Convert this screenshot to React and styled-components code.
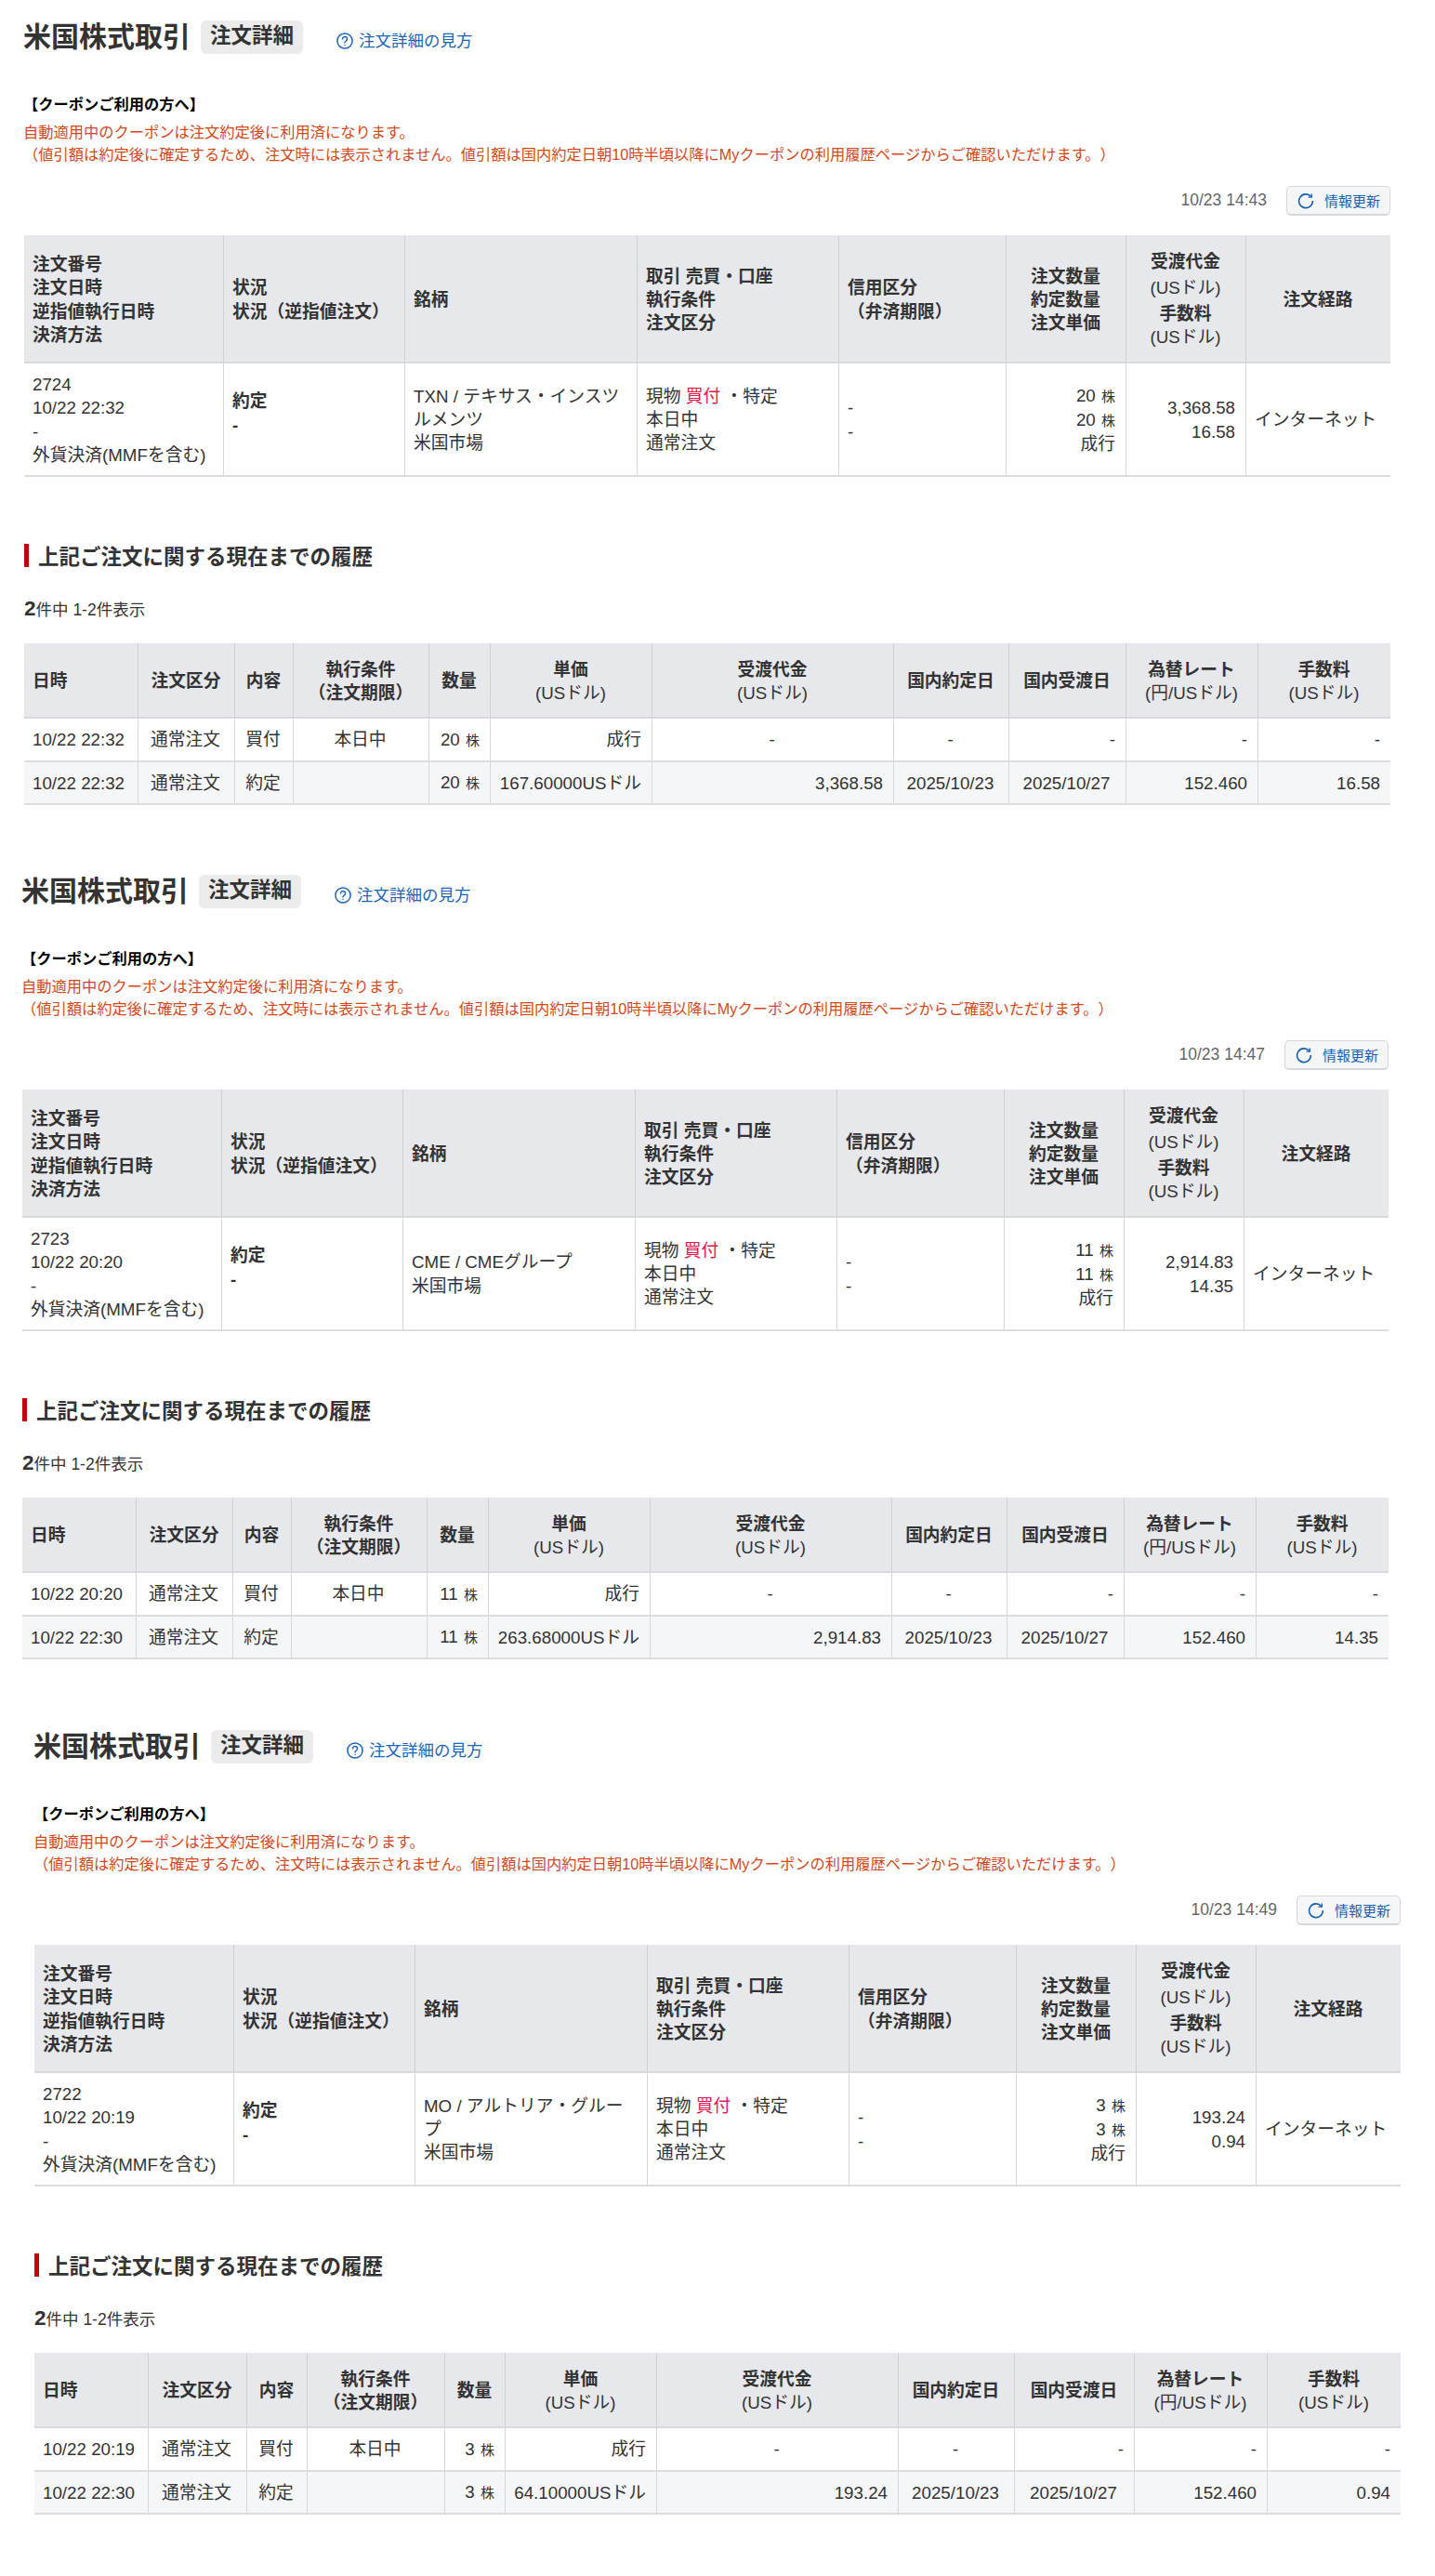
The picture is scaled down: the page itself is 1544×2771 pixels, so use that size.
import React from 'react';
import styled, { createGlobalStyle } from 'styled-components';

const Global = createGlobalStyle`
  html, body { margin: 0; padding: 0; background: #fff; }
  body {
    font-family: "Liberation Sans", "Noto Sans CJK JP", sans-serif;
    font-size: 18.75px;
    line-height: 25.3px;
    color: #333;
    text-spacing-trim: space-all;
  }
`;

const Section = styled.section`
  width: 1470px;
  margin-left: ${(p) => p.$x}px;
  padding-top: 22px;
  padding-bottom: ${(p) => p.$after}px;
`;
const TitleRow = styled.div`
  display: flex;
  align-items: flex-start;
  height: 36px;
`;
const Title = styled.h1`
  margin: 0 11px 0 -1px;
  font-size: 30px;
  line-height: 36px;
  font-weight: 700;
  color: #333;
`;
const Tag = styled.span`
  height: 36px;
  padding: 0 10px;
  border-radius: 6px;
  background: #ebebeb;
  font-size: 22.5px;
  line-height: 34px;
  font-weight: 700;
  color: #333;
`;
const HelpLink = styled.a`
  display: flex;
  align-items: center;
  gap: 6px;
  margin: 9px 0 0 36px;
  font-size: 17.5px;
  line-height: 26px;
  color: #1a66b8;
`;
const Coupon = styled.div`
  margin: 42px 0 0 -1px;
  font-size: 16.25px;
  line-height: 24px;
`;
const CouponTitle = styled.div`
  margin-bottom: 6px;
  font-weight: 700;
  color: #000;
`;
const CouponNote = styled.div`
  color: #d4481a;
`;
const MetaRow = styled.div`
  display: flex;
  justify-content: flex-end;
  align-items: center;
  gap: 21px;
  margin-top: 22px;
`;
const Stamp = styled.span`
  font-size: 17.5px;
  color: #666;
`;
const Refresh = styled.button`
  display: flex;
  align-items: center;
  gap: 11px;
  box-sizing: border-box;
  width: 112px;
  height: 32px;
  padding: 0 0 0 11px;
  border: 1px solid #d6d7da;
  border-bottom-width: 2px;
  border-radius: 5px;
  background: #f5f6f8;
  font-family: inherit;
  font-size: 15px;
  color: #1a62b4;
`;
const Table = styled.table`
  width: 1470px;
  margin-top: ${(p) => p.$top}px;
  table-layout: fixed;
  border-collapse: separate;
  border-spacing: 0;
`;
const Th = styled.th`
  box-sizing: border-box;
  height: ${(p) => p.$h}px;
  padding: 3px 10px 0 9px;
  background: #e7e8ec;
  border-bottom: 2px solid #d8d9dc;
  border-left: 1px solid #d0d1d5;
  text-align: ${(p) => p.$align || 'center'};
  vertical-align: middle;
  font-weight: 700;
  &:first-child { border-left: 0; }
`;
const Sub = styled.span`
  display: block;
  margin-top: ${(p) => p.$gap || 0}px;
  font-weight: 400;
`;
const FeeLabel = styled.span`
  display: block;
  margin-top: 3px;
`;
const Plain = styled.span`
  display: block;
  white-space: nowrap;
`;
const Td = styled.td`
  box-sizing: border-box;
  height: ${(p) => p.$h}px;
  padding: 1px 11px 0 9px;
  background: ${(p) => (p.$alt ? '#f5f6f8' : '#fff')};
  border-bottom: 2px solid #dcdde0;
  border-left: 1px solid #d6d7d9;
  text-align: ${(p) => p.$align || 'left'};
  vertical-align: middle;
  white-space: ${(p) => (p.$nowrap ? 'nowrap' : 'normal')};
  &:first-child { border-left: 0; }
`;
const Status = styled.div`
  padding-bottom: 14px;
  font-weight: 700;
`;
const Buy = styled.span`
  color: #e5174f;
`;
const Unit = styled.small`
  margin-left: 1px;
  font-size: 15px;
`;
const Heading = styled.h2`
  box-sizing: border-box;
  height: 25px;
  margin: 72px 0 0;
  padding-left: 10px;
  border-left: 5px solid #c4000b;
  font-size: 22.5px;
  line-height: 29px;
  font-weight: 700;
  color: #333;
`;
const Count = styled.div`
  height: 25px;
  margin-top: 32px;
  font-size: 17.5px;
  line-height: 25px;
`;
const CountNum = styled.b`
  font-size: 22.5px;
`;

const QuestionIcon = () => (
  <svg width="18" height="18" viewBox="0 0 18 18" fill="none" stroke="#1a66b8" strokeWidth="1.5" strokeLinecap="round" aria-hidden="true">
    <circle cx="9" cy="9" r="8.1" />
    <path d="M6.5 6.9a2.5 2.5 0 1 1 3.9 2.1c-.9.6-1.4 1-1.4 2.1" />
    <path d="M9 13.5v.1" />
  </svg>
);

const RefreshIcon = () => (
  <svg width="18" height="18" viewBox="0 0 18 18" fill="none" stroke="#1a62b4" strokeWidth="1.6" aria-hidden="true">
    <path d="M14.6 4.4A7.4 7.4 0 1 0 16.4 9" />
    <path d="M15.3 1.4v3.7h-3.7" strokeWidth="1.4" />
  </svg>
);

const mainCols = [214, 195, 250, 217, 180, 129, 129, 156];
const wideCols = [122, 104, 63, 146, 66, 174, 260, 124, 126, 142, 143];
const narrowCols = [122, 106, 65, 148, 65, 163, 260, 125, 129, 143, 144];

const histHead = [
  [<>日時</>, 'left'],
  [<>注文区分</>],
  [<>内容</>],
  [<>執行条件<br />（注文期限）</>],
  [<>数量</>],
  [<>単価<Sub>(USドル)</Sub></>],
  [<>受渡代金<Sub>(USドル)</Sub></>],
  [<>国内約定日</>],
  [<>国内受渡日</>],
  [<>為替レート<Sub>(円/USドル)</Sub></>],
  [<>手数料<Sub>(USドル)</Sub></>],
];

const orders = [
  {
    x: 26, after: 53, cols: wideCols, stamp: '10/23 14:43', id: '2724', ordered: '10/22 22:32', name: 'TXN / テキサス・インスツルメンツ', qty: 20,
    amount: '3,368.58', fee: '16.58', first: '10/22 22:32', second: '10/22 22:32', price: '167.60000USドル',
  },
  {
    x: 24, after: 54, cols: wideCols, stamp: '10/23 14:47', id: '2723', ordered: '10/22 20:20', name: 'CME / CMEグループ', qty: 11,
    amount: '2,914.83', fee: '14.35', first: '10/22 20:20', second: '10/22 22:30', price: '263.68000USドル',
  },
  {
    x: 37, after: 66, cols: narrowCols, stamp: '10/23 14:49', id: '2722', ordered: '10/22 20:19', name: 'MO / アルトリア・グループ', qty: 3,
    amount: '193.24', fee: '0.94', first: '10/22 20:19', second: '10/22 22:30', price: '64.10000USドル',
  },
];

function OrderSection({ o }) {
  return (
    <Section $x={o.x} $after={o.after}>
      <TitleRow>
        <Title>米国株式取引</Title>
        <Tag>注文詳細</Tag>
        <HelpLink><QuestionIcon />注文詳細の見方</HelpLink>
      </TitleRow>
      <Coupon>
        <CouponTitle>【クーポンご利用の方へ】</CouponTitle>
        <CouponNote>
          自動適用中のクーポンは注文約定後に利用済になります。<br />
          （値引額は約定後に確定するため、注文時には表示されません。値引額は国内約定日朝10時半頃以降にMyクーポンの利用履歴ページからご確認いただけます。）
        </CouponNote>
      </Coupon>
      <MetaRow>
        <Stamp>{o.stamp}</Stamp>
        <Refresh type="button"><RefreshIcon />情報更新</Refresh>
      </MetaRow>
      <Table $top={21}>
        <colgroup>{mainCols.map((w, i) => <col key={i} style={{ width: w }} />)}</colgroup>
        <thead>
          <tr>
            <Th $h={138} $align="left">注文番号<br />注文日時<br />逆指値執行日時<br />決済方法</Th>
            <Th $h={138} $align="left"><Plain>状況<br />状況（逆指値注文）</Plain></Th>
            <Th $h={138} $align="left">銘柄</Th>
            <Th $h={138} $align="left">取引 売買・口座<br />執行条件<br />注文区分</Th>
            <Th $h={138} $align="left"><Plain>信用区分</Plain><Plain>（弁済期限）</Plain></Th>
            <Th $h={138}>注文数量<br />約定数量<br />注文単価</Th>
            <Th $h={138}>受渡代金<Sub $gap={2}>(USドル)</Sub><FeeLabel>手数料</FeeLabel><Sub>(USドル)</Sub></Th>
            <Th $h={138}>注文経路</Th>
          </tr>
        </thead>
        <tbody>
          <tr>
            <Td $h={122} $nowrap>{o.id}<br />{o.ordered}<br />-<br />外貨決済(MMFを含む)</Td>
            <Td $h={122}><Status>約定<br />-</Status></Td>
            <Td $h={122}>{o.name}<br />米国市場</Td>
            <Td $h={122}>現物 <Buy>買付</Buy> ・特定<br />本日中<br />通常注文</Td>
            <Td $h={122}>-<br />-</Td>
            <Td $h={122} $align="right">{o.qty} <Unit>株</Unit><br />{o.qty} <Unit>株</Unit><br />成行</Td>
            <Td $h={122} $align="right">{o.amount}<br />{o.fee}</Td>
            <Td $h={122} $nowrap>インターネット</Td>
          </tr>
        </tbody>
      </Table>
      <Heading>上記ご注文に関する現在までの履歴</Heading>
      <Count><CountNum>2</CountNum>件中 1-2件表示</Count>
      <Table $top={25}>
        <colgroup>{o.cols.map((w, i) => <col key={i} style={{ width: w }} />)}</colgroup>
        <thead>
          <tr>
            {histHead.map(([label, align], i) => <Th key={i} $h={81} $align={align}>{label}</Th>)}
          </tr>
        </thead>
        <tbody>
          <tr>
            <Td $h={47} $nowrap>{o.first}</Td>
            <Td $h={47} $nowrap $align="center">通常注文</Td>
            <Td $h={47} $nowrap $align="center">買付</Td>
            <Td $h={47} $nowrap $align="center">本日中</Td>
            <Td $h={47} $nowrap $align="right">{o.qty} <Unit>株</Unit></Td>
            <Td $h={47} $nowrap $align="right">成行</Td>
            <Td $h={47} $align="center">-</Td>
            <Td $h={47} $align="center">-</Td>
            <Td $h={47} $align="right">-</Td>
            <Td $h={47} $align="right">-</Td>
            <Td $h={47} $align="right">-</Td>
          </tr>
          <tr>
            <Td $h={46} $alt $nowrap>{o.second}</Td>
            <Td $h={46} $alt $nowrap $align="center">通常注文</Td>
            <Td $h={46} $alt $nowrap $align="center">約定</Td>
            <Td $h={46} $alt />
            <Td $h={46} $alt $nowrap $align="right">{o.qty} <Unit>株</Unit></Td>
            <Td $h={46} $alt $nowrap $align="right">{o.price}</Td>
            <Td $h={46} $alt $align="right">{o.amount}</Td>
            <Td $h={46} $alt $nowrap $align="center">2025/10/23</Td>
            <Td $h={46} $alt $nowrap $align="center">2025/10/27</Td>
            <Td $h={46} $alt $align="right">152.460</Td>
            <Td $h={46} $alt $align="right">{o.fee}</Td>
          </tr>
        </tbody>
      </Table>
    </Section>
  );
}

export default function App() {
  return (
    <>
      <Global />
      {orders.map((o) => <OrderSection key={o.id} o={o} />)}
    </>
  );
}
